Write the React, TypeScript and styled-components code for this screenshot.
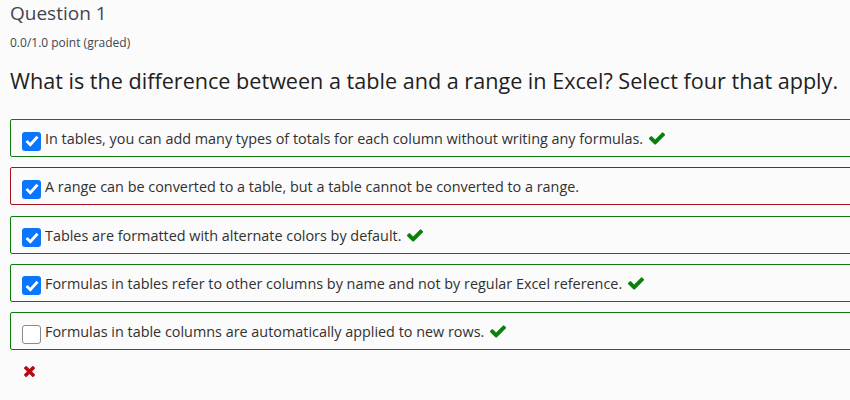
import React from "react";
import styled, { createGlobalStyle } from "styled-components";

const GlobalStyle = createGlobalStyle`
  html, body {
    margin: 0;
    padding: 0;
    background: #fbfbfb;
    overflow: hidden;
  }
  body {
    font-family: "Open Sans", "Liberation Sans", sans-serif;
  }
`;

const Page = styled.div`
  width: 880px;
  padding: 0 0 0 10px;
`;

const Title = styled.h3`
  margin: 0;
  font-size: 19px;
  font-weight: 400;
  line-height: 26px;
  color: #414651;
`;

const Points = styled.div`
  margin-top: 9px;
  font-size: 12px;
  line-height: 16px;
  color: #414651;
`;

const Prompt = styled.p`
  margin: 15px 0 0;
  font-size: 21.6px;
  line-height: 30px;
  color: #1f1f1f;
`;

const Options = styled.div`
  margin-top: 23px;
  display: flex;
  flex-direction: column;
  gap: 10.25px;
`;

const Option = styled.label<{ $state: "correct" | "incorrect" }>`
  display: flex;
  align-items: center;
  height: 38px;
  box-sizing: border-box;
  padding: 1px 0 0 11px;
  border: 1px solid ${(p) => (p.$state === "correct" ? "#0b7c0b" : "#a8101c")};
  border-radius: 2px;
  font-size: 14.4px;
  color: #313131;
`;

const Box = styled.span<{ $checked: boolean }>`
  display: inline-flex;
  align-items: center;
  justify-content: center;
  width: 19px;
  height: 19px;
  box-sizing: border-box;
  margin: 5px 4px 0 0;
  border-radius: 3px;
  background: ${(p) => (p.$checked ? "#0a75fe" : "#ffffff")};
  border: ${(p) => (p.$checked ? "none" : "1px solid #8a8a8a")};
  flex-shrink: 0;
`;

const Mark = styled.svg`
  margin-left: 6px;
  flex-shrink: 0;
`;

const Result = styled.div`
  margin: 10px 0 0 14px;
`;

const Check = () => (
  <Mark width="16" height="13" viewBox="121 334 1550 1188">
    <path
      fill="#0a800a"
      d="M1671 566q0 40-28 68l-724 724-136 136q-28 28-68 28t-68-28l-136-136-362-362q-28-28-28-68t28-68l136-136q28-28 68-28t68 28l294 295 656-657q28-28 68-28t68 28l136 136q28 28 28 68z"
    />
  </Mark>
);

const Cross = () => (
  <svg width="11" height="11" viewBox="0 232 1188 1188">
    <path
      fill="#b40a14"
      d="M1188 1188q0 40-28 68l-136 136q-28 28-68 28t-68-28l-294-294-294 294q-28 28-68 28t-68-28l-136-136q-28-28-28-68t28-68l294-294-294-294q-28-28-28-68t28-68l136-136q28-28 68-28t68 28l294 294 294-294q28-28 68-28t68 28l136 136q28 28 28 68t-28 68l-294 294 294 294q28 28 28 68z"
    />
  </svg>
);

const items: { text: string; checked: boolean; state: "correct" | "incorrect"; mark: boolean }[] = [
  { text: "In tables, you can add many types of totals for each column without writing any formulas.", checked: true, state: "correct", mark: true },
  { text: "A range can be converted to a table, but a table cannot be converted to a range.", checked: true, state: "incorrect", mark: false },
  { text: "Tables are formatted with alternate colors by default.", checked: true, state: "correct", mark: true },
  { text: "Formulas in tables refer to other columns by name and not by regular Excel reference.", checked: true, state: "correct", mark: true },
  { text: "Formulas in table columns are automatically applied to new rows.", checked: false, state: "correct", mark: true },
];

export default function App() {
  return (
    <>
      <GlobalStyle />
      <Page>
        <Title>Question 1</Title>
        <Points>0.0/1.0 point (graded)</Points>
        <Prompt>What is the difference between a table and a range in Excel? Select four that apply.</Prompt>
        <Options>
          {items.map((it, i) => (
            <Option key={i} $state={it.state}>
              <Box $checked={it.checked}>
                {it.checked && (
                  <svg width="14" height="12" viewBox="0 0 14 12">
                    <path d="M1.5 6 L5.3 9.7 L12.5 1.8" fill="none" stroke="#ffffff" strokeWidth="2.8" />
                  </svg>
                )}
              </Box>
              {it.text}
              {it.mark && <Check />}
            </Option>
          ))}
        </Options>
        <Result>
          <Cross />
        </Result>
      </Page>
    </>
  );
}
